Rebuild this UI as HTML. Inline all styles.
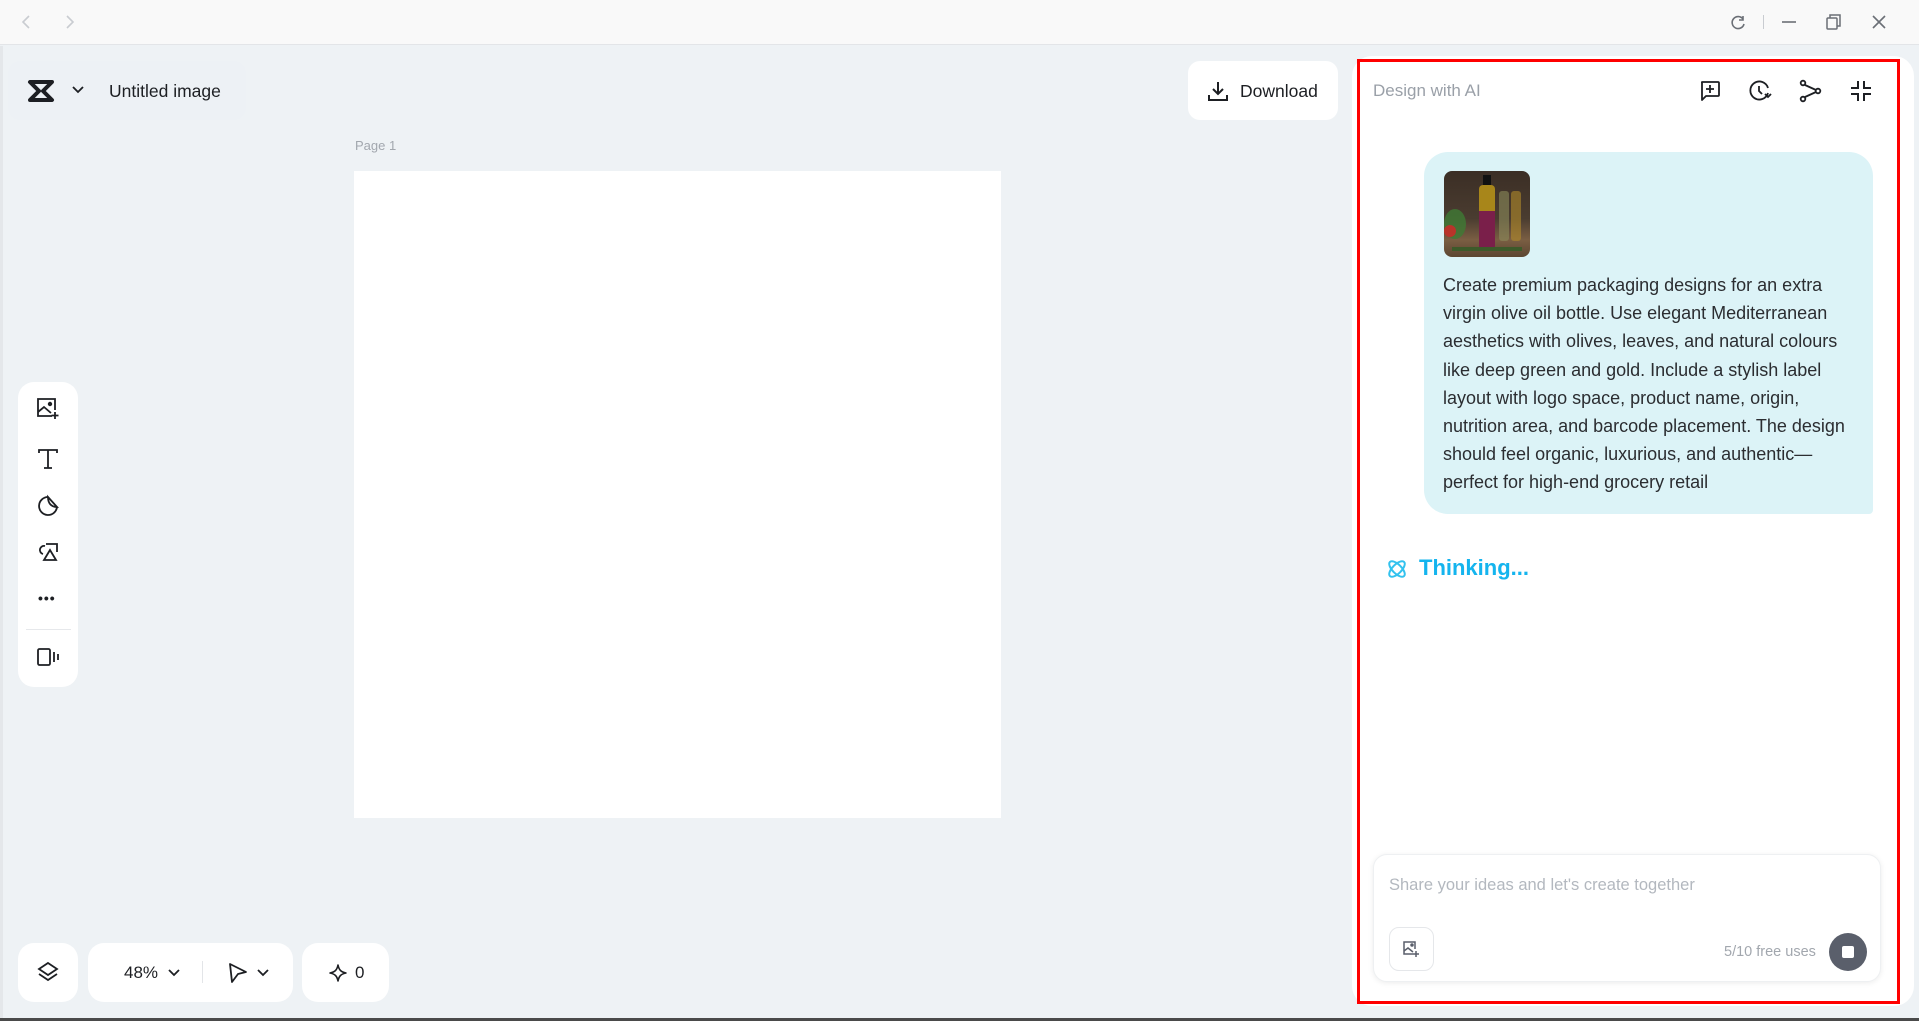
<!DOCTYPE html>
<html><head><meta charset="utf-8"><style>
*{box-sizing:border-box;margin:0;padding:0}
body{width:1919px;height:1021px;overflow:hidden;background:#eef2f5;font-family:"Liberation Sans",sans-serif;position:relative;color:#1d1f23}
.abs{position:absolute}
.card{position:absolute;background:#fff;border-radius:16px}
svg{position:absolute;overflow:visible}
</style></head><body>
<!-- title bar -->
<div class="abs" style="left:0;top:0;width:1919px;height:45px;background:#f9f9f9;border-bottom:1px solid #e3e5e8"></div>
<svg style="left:20px;top:15px" width="14" height="14" fill="none" stroke="#c9ccd1" stroke-width="1.6"><path d="M9 1L3 7l6 6"/></svg>
<svg style="left:63px;top:15px" width="14" height="14" fill="none" stroke="#c9ccd1" stroke-width="1.6"><path d="M4 1l6 6-6 6"/></svg>
<svg style="left:1730px;top:15px" width="16" height="16" fill="none" stroke="#6b6f76" stroke-width="1.6"><path d="M13 4A6 6 0 1 0 14 9"/><path d="M13 1v4H9"/></svg>
<div class="abs" style="left:1763px;top:15px;width:1px;height:14px;background:#c9ccd1"></div>
<svg style="left:1781px;top:15px" width="16" height="16" stroke="#6b6f76" stroke-width="1.6"><path d="M1 7h14"/></svg>
<svg style="left:1826px;top:14px" width="16" height="16" fill="none" stroke="#6b6f76" stroke-width="1.5"><rect x="1" y="4" width="10" height="11" rx="1"/><path d="M4 4V1h10v11h-3"/></svg>
<svg style="left:1872px;top:15px" width="14" height="14" stroke="#6b6f76" stroke-width="1.6"><path d="M1 1l12 12M13 1L1 13"/></svg>
<div class="abs" style="left:0;top:46px;width:3px;height:975px;background:#e4e7ea"></div>

<!-- header pill -->
<div class="card" style="left:8px;top:61px;width:238px;height:59px;border-radius:12px;background:#edf1f5"></div>
<svg style="left:28px;top:80px" width="26" height="22"><path d="M2 2h22l-9 9 9 9H2l9-9z" fill="none" stroke="#1d1f23" stroke-width="4" stroke-linejoin="round"/></svg>
<svg style="left:72px;top:86px" width="12" height="8" fill="none" stroke="#1d1f23" stroke-width="1.8"><path d="M1 1l5 5 5-5"/></svg>
<div class="abs" style="left:109px;top:81px;font-size:17.5px;color:#1d1f23">Untitled image</div>

<!-- download -->
<div class="card" style="left:1188px;top:61px;width:150px;height:59px;border-radius:12px"></div>
<svg style="left:1208px;top:81px" width="20" height="20" fill="none" stroke="#1d1f23" stroke-width="2"><path d="M10 1v12M5 8l5 5 5-5M1 14v5h18v-5"/></svg>
<div class="abs" style="left:1240px;top:81px;font-size:17.5px">Download</div>

<!-- page -->
<div class="abs" style="left:355px;top:138px;font-size:13px;color:#a2a7ae">Page 1</div>
<div class="abs" style="left:354px;top:171px;width:647px;height:647px;background:#fff"></div>

<!-- left toolbar -->
<div class="card" style="left:18px;top:382px;width:60px;height:305px"></div>
<svg style="left:36px;top:397px" width="24" height="24" fill="none" stroke="#1d1f23" stroke-width="1.8"><path d="M16 19H2V2h17v11"/><path d="M2 15l6-5 7 6"/><circle cx="14" cy="7" r="1.3" fill="#1d1f23"/><path d="M19 15v7M15.5 18.5h7"/></svg>
<svg style="left:38px;top:449px" width="22" height="22" fill="none" stroke="#1d1f23" stroke-width="1.8"><path d="M1 4V1h18v3M10 1v18M6 19h8"/></svg>
<svg style="left:37px;top:496px" width="24" height="22" fill="none" stroke="#1d1f23" stroke-width="1.8"><path d="M11 1a9 9 0 1 0 9 10"/><path d="M11 1c0 6 3 10 9 10z"/></svg>
<svg style="left:37px;top:542px" width="24" height="22" fill="none" stroke="#1d1f23" stroke-width="1.8"><path d="M8 4A4 4 0 1 0 6 12"/><path d="M9 2h11v8"/><path d="M13 8l-6 10h12z"/></svg>
<div class="abs" style="left:38px;top:590px;width:22px;font-size:14px;font-weight:bold;letter-spacing:1px">•••</div>
<div class="abs" style="left:26px;top:629px;width:45px;height:1px;background:#e6e8eb"></div>
<svg style="left:37px;top:647px" width="24" height="22" fill="none" stroke="#1d1f23" stroke-width="1.8"><rect x="1" y="2" width="12" height="16" rx="1.5"/><path d="M17 5v10M21 7v6"/></svg>

<!-- bottom controls -->
<div class="card" style="left:18px;top:943px;width:60px;height:59px"></div>
<svg style="left:38px;top:962px" width="20" height="20" fill="none" stroke="#1d1f23" stroke-width="1.8"><path d="M10 1l9 6-9 6-9-6z"/><path d="M1 12l9 6 9-6"/></svg>
<div class="card" style="left:88px;top:943px;width:205px;height:59px"></div>
<div class="abs" style="left:124px;top:963px;font-size:17px">48%</div>
<svg style="left:168px;top:969px" width="12" height="8" fill="none" stroke="#1d1f23" stroke-width="1.8"><path d="M1 1l5 5 5-5"/></svg>
<div class="abs" style="left:202px;top:961px;width:1px;height:22px;background:#e3e5e8"></div>
<svg style="left:228px;top:962px" width="20" height="22" fill="none" stroke="#1d1f23" stroke-width="1.8" stroke-linejoin="round"><path d="M2 2l16 8-8 2-6 8z"/></svg>
<svg style="left:257px;top:969px" width="12" height="8" fill="none" stroke="#1d1f23" stroke-width="1.8"><path d="M1 1l5 5 5-5"/></svg>
<div class="card" style="left:302px;top:943px;width:87px;height:59px"></div>
<svg style="left:329px;top:964px" width="18" height="18" fill="none" stroke="#1d1f23" stroke-width="1.6" stroke-linejoin="round"><path d="M9 1c1 5 3 7 8 8-5 1-7 3-8 8-1-5-3-7-8-8 5-1 7-3 8-8z"/></svg>
<div class="abs" style="left:355px;top:963px;font-size:17px">0</div>

<!-- right panel -->
<div class="card" style="left:1352px;top:56px;width:562px;height:950px;border-radius:20px"></div>
<div class="abs" style="left:1357px;top:59px;width:543px;height:945px;border:3px solid #f00"></div>
<div class="abs" style="left:1373px;top:81px;font-size:17px;color:#9aa0a8">Design with AI</div>
<svg style="left:1699px;top:80px" width="22" height="22" fill="none" stroke="#1d1f23" stroke-width="1.8" stroke-linejoin="round"><path d="M3 2h16a1 1 0 0 1 1 1v12a1 1 0 0 1-1 1H7l-4 4V3a1 1 0 0 1 0-1z"/><path d="M11 5v8M7 9h8"/></svg>
<svg style="left:1749px;top:80px" width="22" height="22" fill="none" stroke="#1d1f23" stroke-width="1.8"><path d="M19 13A9 9 0 1 1 19 8"/><path d="M10 6v5l3 3"/><path d="M16 14l3 3 3-3"/></svg>
<svg style="left:1799px;top:80px" width="22" height="22" fill="none" stroke="#1d1f23" stroke-width="1.8"><circle cx="4" cy="3" r="2.3"/><circle cx="4" cy="19" r="2.3"/><circle cx="19" cy="11" r="2.3"/><path d="M6 5l11 5M6 17l11-5"/></svg>
<svg style="left:1850px;top:80px" width="22" height="22" fill="none" stroke="#1d1f23" stroke-width="2"><path d="M8 1v7H1M14 1v7h7M8 21v-7H1M14 21v-7h7"/></svg>

<div class="abs" style="left:1424px;top:152px;width:449px;height:362px;background:#dcf3f7;border-radius:24px 24px 4px 24px"></div>
<div class="abs" style="left:1444px;top:171px;width:86px;height:86px;border-radius:8px;overflow:hidden;background:linear-gradient(180deg,#3b2e25 0%,#4a3c30 55%,#7a5e43 80%,#5c4632 100%)">
 <div class="abs" style="left:0;top:38px;width:22px;height:30px;border-radius:50%;background:#3e7b34;opacity:.8"></div>
 <div class="abs" style="left:0;top:54px;width:12px;height:12px;border-radius:50%;background:#b9342a"></div>
 <div class="abs" style="left:55px;top:20px;width:10px;height:50px;background:#8a8a5a;opacity:.6;border-radius:3px"></div>
 <div class="abs" style="left:67px;top:20px;width:10px;height:50px;background:#b08a2a;opacity:.6;border-radius:3px"></div>
 <div class="abs" style="left:39px;top:4px;width:8px;height:10px;background:#111"></div>
 <div class="abs" style="left:35px;top:14px;width:16px;height:66px;background:#a8861a;border-radius:4px 4px 2px 2px"></div>
 <div class="abs" style="left:35px;top:40px;width:16px;height:38px;background:#7a1f4a"></div>
 <div class="abs" style="left:8px;top:76px;width:70px;height:4px;background:#3d5a2a"></div>
</div>
<div class="abs" style="left:1443px;top:271px;width:420px;font-size:18px;line-height:28.2px;color:#2b2d31">Create premium packaging designs for an extra virgin olive oil bottle. Use elegant Mediterranean aesthetics with olives, leaves, and natural colours like deep green and gold. Include a stylish label layout with logo space, product name, origin, nutrition area, and barcode placement. The design should feel organic, luxurious, and authentic—perfect for high-end grocery retail</div>

<svg style="left:1386px;top:558px" width="22" height="22" fill="none" stroke="#33c2ee" stroke-width="2"><ellipse cx="11" cy="11" rx="10" ry="4.5" transform="rotate(45 11 11)"/><ellipse cx="11" cy="11" rx="10" ry="4.5" transform="rotate(-45 11 11)"/></svg>
<div class="abs" style="left:1419px;top:555px;font-size:22px;font-weight:bold;color:#14b4ee">Thinking...</div>

<div class="abs" style="left:1373px;top:854px;width:508px;height:128px;background:#fff;border-radius:14px;box-shadow:0 1px 6px rgba(0,0,0,.08);border:1px solid #eef0f2"></div>
<div class="abs" style="left:1389px;top:876px;font-size:16.5px;color:#b3b8bf">Share your ideas and let's create together</div>
<div class="abs" style="left:1389px;top:927px;width:45px;height:44px;border:1px solid #e5e7ea;border-radius:10px"></div>
<svg style="left:1402px;top:940px" width="18" height="18" fill="none" stroke="#5a5f6b" stroke-width="1.5"><path d="M11 14H2V2h11v7"/><path d="M2 11l4-3 5 4"/><circle cx="10" cy="5" r="1" fill="#5a5f6b"/><path d="M14 11v6M11 14h6"/></svg>
<div class="abs" style="left:1724px;top:944px;font-size:14.5px;color:#a2a7ae">5/10 free uses</div>
<div class="abs" style="left:1829px;top:933px;width:38px;height:38px;border-radius:50%;background:#5a5f6b"></div>
<div class="abs" style="left:1842px;top:946px;width:12px;height:12px;border-radius:2px;background:#fff"></div>

<div class="abs" style="left:0;top:1018px;width:1919px;height:3px;background:#4a4a4a"></div>
</body></html>
